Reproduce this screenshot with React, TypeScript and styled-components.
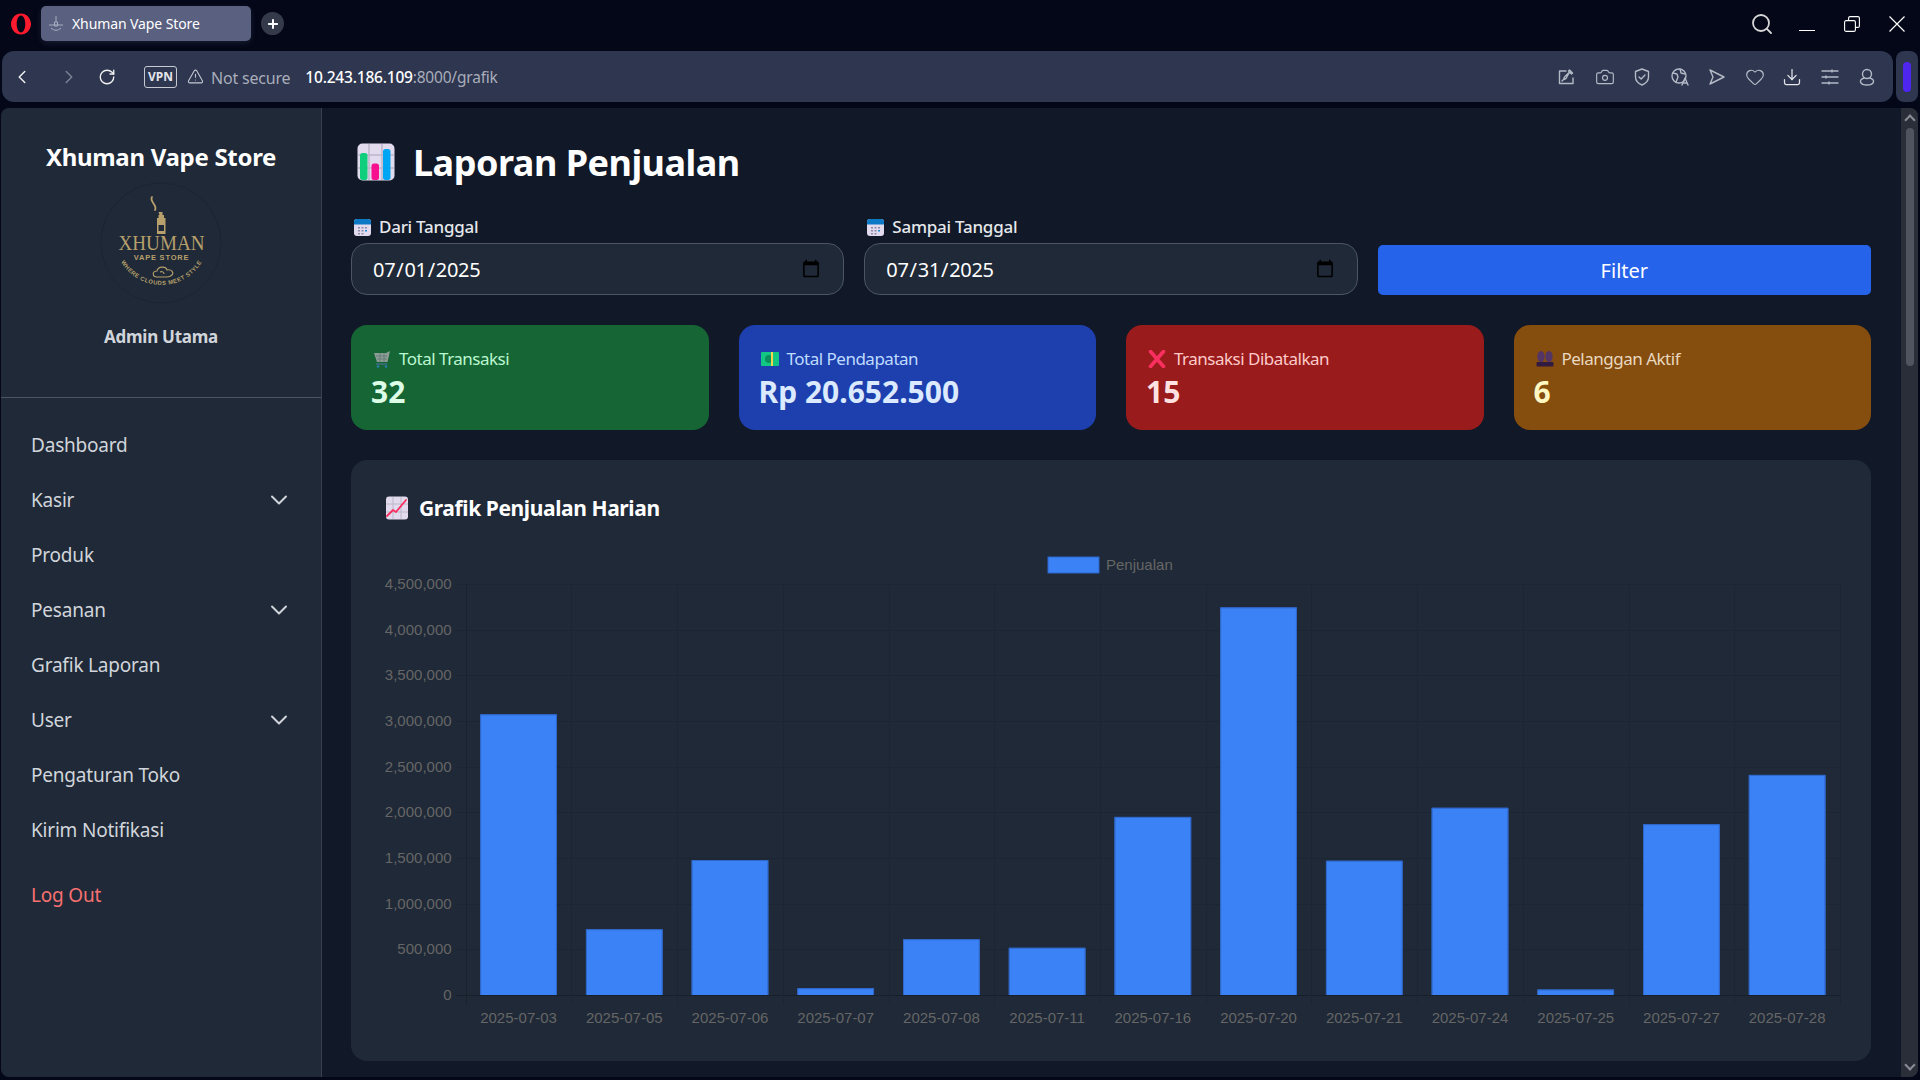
import React from "react";
import styled, { createGlobalStyle } from "styled-components";
import { ChevronDown, ChevronLeft, ChevronRight, RotateCw, Search, TriangleAlert, Plus, Camera, Heart, Download } from "lucide-react";

const FONT = `"Noto Sans", "Open Sans", sans-serif`;

const GlobalStyle = createGlobalStyle`
  * { box-sizing: border-box; }
  html, body { margin: 0; padding: 0; background: #000; }
  body { font-family: ${FONT}; overflow: hidden; }
`;

const navItems = [
  { label: "Dashboard" },
  { label: "Kasir", sub: true },
  { label: "Produk" },
  { label: "Pesanan", sub: true },
  { label: "Grafik Laporan" },
  { label: "User", sub: true },
  { label: "Pengaturan Toko" },
  { label: "Kirim Notifikasi" },
];

const sales = [
  { date: "2025-07-03", value: 3073000 },
  { date: "2025-07-05", value: 720000 },
  { date: "2025-07-06", value: 1478000 },
  { date: "2025-07-07", value: 75000 },
  { date: "2025-07-08", value: 611000 },
  { date: "2025-07-11", value: 517000 },
  { date: "2025-07-16", value: 1950000 },
  { date: "2025-07-20", value: 4244000 },
  { date: "2025-07-21", value: 1470000 },
  { date: "2025-07-24", value: 2050000 },
  { date: "2025-07-25", value: 60000 },
  { date: "2025-07-27", value: 1870000 },
  { date: "2025-07-28", value: 2410000 },
];

function OperaLogo() {
  return (
    <svg width="22" height="24" viewBox="0 0 22 24">
      <path
        fillRule="evenodd"
        fill="#ff1b2d"
        d="M11 1.500c5.500 0 10 4.700 10 10.500s-4.500 10.500-10 10.500S1 17.800 1 12 5.500 1.500 11 1.500zm0 2c-2.500 0-4.300 3.800-4.300 8.500s1.800 8.500 4.300 8.500 4.300-3.800 4.300-8.500-1.800-8.500-4.300-8.500z"
      />
    </svg>
  );
}

function TabIcon() {
  return (
    <svg width="18" height="18" viewBox="0 0 18 18" fill="none" stroke="#a9adc0" strokeWidth="1">
      <path d="M9 1v6M7.500 7h3v4h-3z" />
      <path d="M2 10h14M4 13c3 3 7 3 10 0" />
    </svg>
  );
}

function RestoreIcon() {
  return (
    <svg width="16" height="16" viewBox="0 0 16 16" fill="none" stroke="#fff" strokeWidth="1.100">
      <rect x="0.600" y="4.600" width="10.800" height="10.800" rx="1.500" />
      <path d="M4.600 4.500V2.100A1.500 1.500 0 0 1 6.100 0.600h7.800a1.500 1.500 0 0 1 1.500 1.500v7.800a1.500 1.500 0 0 1-1.500 1.500h-2.400" />
    </svg>
  );
}

function CloseIcon() {
  return (
    <svg width="16" height="16" viewBox="0 0 16 16" fill="none" stroke="#fff" strokeWidth="1.200">
      <path d="M0.500 0.500l15 15M15.500 0.500l-15 15" />
    </svg>
  );
}

function ToolIcon({ children }: { children: React.ReactNode }) {
  return (
    <svg width="20" height="20" viewBox="0 0 20 20" fill="none" stroke="#b4b9c6" strokeWidth="1.400" strokeLinecap="round" strokeLinejoin="round">
      {children}
    </svg>
  );
}

function BarsEmoji() {
  return (
    <svg width="38" height="38" viewBox="0 0 38 38">
      <rect x="0.500" y="0.500" width="37" height="37" rx="5" fill="#e2dbed" />
      <path d="M12 1v36M25 1v36M1 12h36M1 25h36" stroke="#bdb6ca" strokeWidth="1.500" />
      <rect x="3" y="10" width="7.500" height="27" rx="2.500" fill="#0fce7c" />
      <rect x="14.500" y="20.500" width="7.500" height="16.500" rx="2.500" fill="#f7118e" />
      <rect x="26" y="6" width="7.500" height="31" rx="2.500" fill="#00a6f4" />
    </svg>
  );
}

function CalendarEmoji() {
  return (
    <svg width="17" height="17" viewBox="0 0 17 17">
      <rect width="17" height="17" rx="3" fill="#e2dbed" />
      <path d="M0 3a3 3 0 0 1 3-3h11a3 3 0 0 1 3 3v2.500H0z" fill="#0c79c7" />
      <path d="M4 8h2v1.500H4zM7.500 8h2v1.500h-2zM11 8h2v1.500h-2zM4 11h2v1.500H4zM7.500 11h2v1.500h-2zM4 14h2v1.500H4zM7.500 14h2v1.500h-2z" fill="#8d89a8" />
      <path d="M11 11h2v1.500h-2z" fill="#1d8fe0" />
    </svg>
  );
}

function CartEmoji() {
  return (
    <svg width="18" height="18" viewBox="0 0 18 18">
      <path d="M1 3h12l4-2-2.500 11H4z" fill="#8d9d95" />
      <path d="M3 6h11M4 9h10M7 3v9M11 3v9" stroke="#5f7a73" strokeWidth="0.800" />
      <path d="M3 14h11" stroke="#3f6f80" strokeWidth="1.500" />
      <circle cx="5" cy="16.500" r="1.300" fill="#2b7fae" />
      <circle cx="13" cy="16.500" r="1.300" fill="#2b7fae" />
    </svg>
  );
}

function MoneyEmoji() {
  return (
    <svg width="18" height="14" viewBox="0 0 18 14">
      <rect width="18" height="14" rx="1" fill="#11c782" />
      <circle cx="8" cy="7" r="4" fill="#0a8f5f" />
      <rect x="10" width="2" height="14" fill="#f5d34a" />
    </svg>
  );
}

function CrossEmoji() {
  return (
    <svg width="18" height="18" viewBox="0 0 18 18">
      <path d="M2.500 1.500 L15.500 16.500 M15.500 1.500 L2.500 16.500" stroke="#f92f60" strokeWidth="3.600" strokeLinecap="round" />
    </svg>
  );
}

function PeopleEmoji() {
  return (
    <svg width="18" height="18" viewBox="0 0 18 18">
      <ellipse cx="5" cy="6.500" rx="3.600" ry="5.500" fill="#533566" />
      <ellipse cx="13" cy="6.500" rx="3.600" ry="5.500" fill="#533566" />
      <rect x="0.500" y="12" width="17" height="4.500" rx="1" fill="#321b41" />
    </svg>
  );
}

function TrendEmoji() {
  return (
    <svg width="24" height="24" viewBox="0 0 24 24">
      <rect x="1" y="0.500" width="22" height="23" rx="3" fill="#e2dbed" />
      <path d="M8 1v22M16 1v22M1 8h22M1 16h22" stroke="#bdb6ca" strokeWidth="1" />
      <path d="M2 20l6-6 3 2 10-12" fill="none" stroke="#f92f60" strokeWidth="1.800" strokeLinecap="round" strokeLinejoin="round" />
    </svg>
  );
}

function StoreLogo() {
  const gold = "#b7a06c";
  return (
    <svg width="122" height="122" viewBox="0 0 122 122">
      <circle cx="61" cy="61" r="60" fill="#1f2937" stroke="#1c2533" strokeWidth="1" />
      <path d="M52 15c-3 5 6 8 3 13" fill="none" stroke={gold} strokeWidth="1.800" strokeLinecap="round" />
      <path d="M58.500 30h4v3h1.500v3h1.500v16h-8.500V36h1.500v-3h1z" fill={gold} />
      <rect x="58.500" y="43" width="5.500" height="6" fill="#1f2937" />
      <text x="61.500" y="68" textAnchor="middle" fontFamily="Liberation Serif, serif" fontSize="21" fill={gold} textLength="86" lengthAdjust="spacingAndGlyphs">XHUMAN</text>
      <text x="61.500" y="78" textAnchor="middle" fontFamily="Liberation Sans, sans-serif" fontSize="7.500" fontWeight="700" fill={gold} letterSpacing="0.800">VAPE STORE</text>
      <path d="M57 95c-5 0-5-6 0-6 1-5 9-5 10-1 5-1 7 3 5 5-1 1-3 2-5 2zM60 90c2-1 4 0 4 2" fill="none" stroke={gold} strokeWidth="1.100" />
      <path id="logoArc" d="M14.500 56 A47 47 0 0 0 108.500 56" fill="none" />
      <text fontFamily="Liberation Sans, sans-serif" fontSize="5.800" fontWeight="700" fill={gold} letterSpacing="0.500">
        <textPath href="#logoArc" startOffset="50%" textAnchor="middle">WHERE CLOUDS MEET STYLE</textPath>
      </text>
    </svg>
  );
}

function SalesChart() {
  const width = 1458;
  const height = 475;
  const left = 82.7;
  const right = 1457;
  const top = 34;
  const bottom = 445;
  const max = 4500000;
  const slot = (right - left) / sales.length;
  const barWidth = 76.7;
  const yOf = (v: number) => bottom - (v / max) * (bottom - top);
  const ticks = Array.from({ length: 10 }, (_, i) => i * 500000);
  return (
    <svg width={width} height={height} viewBox={`0 0 ${width} ${height}`}>
      <rect x="665" y="7" width="51" height="16" fill="#3b82f6" stroke="#2f66c8" strokeWidth="1" />
      <ChartText x="723" y="20">Penjualan</ChartText>
      {ticks.map((t) => (
        <g key={t}>
          <line x1={left - 9} x2={right} y1={Math.round(yOf(t)) + 0.5} y2={Math.round(yOf(t)) + 0.5} stroke={t === 0 ? "#172029" : "#1c2532"} />
          <ChartText x="68.600" y={yOf(t) + 5} textAnchor="end">{t.toLocaleString("en-US")}</ChartText>
        </g>
      ))}
      {Array.from({ length: sales.length + 1 }, (_, i) => (
        <line key={i} x1={Math.round(left + i * slot) + 0.5} x2={Math.round(left + i * slot) + 0.5} y1={top} y2={bottom + 10} stroke={i === 0 ? "#19212d" : "#1c2532"} />
      ))}
      {sales.map((s, i) => {
        const x = left + slot * (i + 0.5) - barWidth / 2;
        return (
          <g key={s.date}>
            <rect x={x} y={yOf(s.value)} width={barWidth} height={bottom - yOf(s.value)} fill="#3b82f6" />
            <path d={`M${x + 0.5} ${bottom}V${yOf(s.value) + 0.5}H${x + barWidth - 0.5}V${bottom}`} fill="none" stroke="#2f66c8" strokeWidth="1" />
            <ChartText x={x + barWidth / 2} y="473" textAnchor="middle">{s.date}</ChartText>
          </g>
        );
      })}
    </svg>
  );
}

const stats = [
  { icon: <CartEmoji />, label: "Total Transaksi", value: "32", bg: "#166534", labelColor: "#bbf7d0", valueColor: "#dcfce7" },
  { icon: <MoneyEmoji />, label: "Total Pendapatan", value: "Rp 20.652.500", bg: "#1e40af", labelColor: "#bfdbfe", valueColor: "#dbeafe" },
  { icon: <CrossEmoji />, label: "Transaksi Dibatalkan", value: "15", bg: "#991b1b", labelColor: "#fecaca", valueColor: "#fee2e2" },
  { icon: <PeopleEmoji />, label: "Pelanggan Aktif", value: "6", bg: "#854d0e", labelColor: "#e9d8c0", valueColor: "#fef9c3" },
];

export default function App() {
  return (
    <>
      <GlobalStyle />
      <Shell>
        <TabStrip>
          <OperaLogo />
          <Tab>
            <TabIcon />
            <TabTitle>Xhuman Vape Store</TabTitle>
          </Tab>
          <NewTab><Plus size={14} strokeWidth={3.5} color="#fff" /></NewTab>
          <WindowControls>
            <SearchSlot><Search size={24} color="#d6d6d6" strokeWidth={1.8} /></SearchSlot>
            <Minimize />
            <RestoreIcon />
            <CloseIcon />
          </WindowControls>
        </TabStrip>
        <AddressRow>
          <AddressBar>
            <ChevronLeft size={22} color="#f0f0f0" strokeWidth={1.6} />
            <ForwardSlot><ChevronRight size={22} color="#7d8396" strokeWidth={1.6} /></ForwardSlot>
            <ReloadSlot><RotateCw size={18} color="#f0f0f0" strokeWidth={1.8} /></ReloadSlot>
            <VpnBadge>VPN</VpnBadge>
            <TriangleAlert size={17} color="#c7cad3" strokeWidth={1.5} />
            <NotSecure>Not secure</NotSecure>
            <Url><b>10.243.186.109</b>:8000/grafik</Url>
            <ToolIcons>
              <ToolIcon><path d="M16 11v5.500H2.500V4H9M9 11.500l-2.500 1 1-2.500 5-5 2 2 1-1-3-3-1 1 1 1zM6.500 12.500L5 14" /></ToolIcon>
              <Camera size={20} color="#b4b9c6" strokeWidth={1.4} />
              <ToolIcon><path d="M10 2l6.500 2.500V10c0 4-3 6.500-6.500 8C6.500 16.500 3.500 14 3.500 10V4.500zM7 10l2.200 2L13 8" /></ToolIcon>
              <ToolIcon><circle cx="9" cy="9" r="7" /><path d="M3 6l4 1 1 3-2 5M10 2l1 4 4 1M12 18l3-7 3 7M13 16h4" /></ToolIcon>
              <ToolIcon><path d="M3 3l14 7-14 7 3-7z" /></ToolIcon>
              <Heart size={20} color="#b4b9c6" strokeWidth={1.4} />
              <Download size={20} color="#e4e6eb" strokeWidth={1.5} />
              <ToolIcon><path d="M2 4h16M2 10h16M2 16h16M12 3v2M6 9v2M9 15v2" /></ToolIcon>
              <ToolIcon><circle cx="10" cy="7" r="4.500" /><path d="M7 11c-6 2-4 7 3 7s9-5 3-7" /></ToolIcon>
            </ToolIcons>
          </AddressBar>
          <SidebarToggle><ToggleMark /></SidebarToggle>
        </AddressRow>
        <Viewport>
          <Sidebar>
            <Brand>
              <BrandName>Xhuman Vape Store</BrandName>
              <StoreLogo />
              <AdminName>Admin Utama</AdminName>
            </Brand>
            <Nav>
              {navItems.map((item) => (
                <NavItem key={item.label}>
                  {item.label}
                  {item.sub && <NavChevron><ChevronDown size={28} color="#d1d5db" strokeWidth={1.700} /></NavChevron>}
                </NavItem>
              ))}
              <LogOut>Log Out</LogOut>
            </Nav>
          </Sidebar>
          <Main>
            <PageTitle><BarsEmoji />Laporan Penjualan</PageTitle>
            <FilterRow>
              <Field>
                <FieldLabel><CalendarEmoji />Dari Tanggal</FieldLabel>
                <DateInput type="date" defaultValue="2025-07-01" />
              </Field>
              <Field>
                <FieldLabel><CalendarEmoji />Sampai Tanggal</FieldLabel>
                <DateInput type="date" defaultValue="2025-07-31" />
              </Field>
              <FilterButton>Filter</FilterButton>
            </FilterRow>
            <StatGrid>
              {stats.map((s) => (
                <StatCard key={s.label} $bg={s.bg}>
                  <StatLabel $color={s.labelColor}>{s.icon}{s.label}</StatLabel>
                  <StatValue $color={s.valueColor}>{s.value}</StatValue>
                </StatCard>
              ))}
            </StatGrid>
            <ChartCard>
              <ChartTitle><TrendEmoji />Grafik Penjualan Harian</ChartTitle>
              <SalesChart />
            </ChartCard>
          </Main>
          <Scrollbar>
            <ScrollArrow $up />
            <ScrollThumb />
            <ScrollArrow />
          </Scrollbar>
        </Viewport>
      </Shell>
    </>
  );
}

const Shell = styled.div`
  display: flex;
  flex-direction: column;
  width: 1920px;
  height: 1080px;
  background: #030717;
  overflow: hidden;
`;
const TabStrip = styled.div`
  display: flex;
  align-items: center;
  height: 51px;
  padding: 0 15px 4px 10px;
  flex: none;
`;
const Tab = styled.div`
  display: flex;
  align-items: center;
  gap: 7px;
  width: 210px;
  height: 35px;
  margin-left: 9px;
  padding-left: 6px;
  background: #5a6080;
  border-radius: 5px;
  box-shadow: 0 2px 6px rgba(90, 96, 128, 0.25);
`;
const TabTitle = styled.span`
  color: #fff;
  font-size: 14px;
  letter-spacing: -0.1px;
`;
const NewTab = styled.div`
  display: flex;
  align-items: center;
  justify-content: center;
  width: 23px;
  height: 23px;
  margin-left: 10px;
  border-radius: 50%;
  background: #353a4a;
`;
const WindowControls = styled.div`
  display: flex;
  align-items: center;
  gap: 29px;
  margin-left: auto;
`;
const SearchSlot = styled.span`
  display: flex;
  margin-right: -4px;
`;
const Minimize = styled.div`
  width: 16px;
  height: 1px;
  margin-top: 14px;
  background: #fff;
`;
const AddressRow = styled.div`
  display: flex;
  gap: 3px;
  height: 51px;
  padding: 0 2px;
  flex: none;
`;
const AddressBar = styled.div`
  display: flex;
  align-items: center;
  flex: 1;
  padding: 0 16px 0 9px;
  background: #2e3650;
  border-radius: 12px;
`;
const ForwardSlot = styled.span`
  display: flex;
  margin-left: 25px;
`;
const ReloadSlot = styled.span`
  display: flex;
  margin-left: 18px;
`;
const VpnBadge = styled.span`
  width: 33px;
  height: 22px;
  margin: 0 10px 0 28px;
  border: 1px solid #c7cad3;
  border-radius: 3px;
  color: #e4e6eb;
  font-size: 12px;
  font-weight: 700;
  line-height: 20px;
  text-align: center;
`;
const NotSecure = styled.span`
  margin: 3px 0 0 7px;
  color: #a9adba;
  font-size: 16px;
  letter-spacing: -0.2px;
`;
const Url = styled.span`
  margin-left: 15px;
  color: #a9adba;
  font-size: 15.500px;
  letter-spacing: -0.2px;
  b {
    color: #fff;
    font-weight: 500;
  }
`;
const ToolIcons = styled.div`
  display: flex;
  align-items: center;
  gap: 17.500px;
  margin-left: auto;
`;
const SidebarToggle = styled.div`
  display: flex;
  align-items: center;
  justify-content: center;
  width: 22px;
  background: #2e3650;
  border-radius: 8px;
`;
const ToggleMark = styled.div`
  width: 8px;
  height: 30px;
  background: #4f25f0;
  border-radius: 4px;
`;
const Viewport = styled.div`
  display: flex;
  height: 969px;
  margin: 6px 2px 0 1px;
  background: #111827;
  border-radius: 8px;
  overflow: hidden;
  flex: none;
`;
const Sidebar = styled.aside`
  width: 321px;
  flex: none;
  background: #1f2937;
  border-right: 1px solid #374151;
`;
const Brand = styled.div`
  display: flex;
  flex-direction: column;
  align-items: center;
  height: 290px;
  padding-top: 30px;
  border-bottom: 1px solid #4b5563;
`;
const BrandName = styled.h1`
  margin: 0 0 6px;
  color: #fff;
  font-size: 24px;
  font-weight: 700;
  line-height: 38px;
  letter-spacing: -0.3px;
`;
const AdminName = styled.div`
  margin-top: 21px;
  color: #d1d5db;
  font-size: 17px;
  font-weight: 700;
  letter-spacing: -0.25px;
`;
const Nav = styled.nav`
  display: flex;
  flex-direction: column;
  padding: 19px 30px 0 30px;
`;
const NavItem = styled.div`
  display: flex;
  align-items: center;
  justify-content: space-between;
  height: 55px;
  color: #d1d5db;
  font-size: 19px;
  letter-spacing: -0.2px;
`;
const NavChevron = styled.span`
  display: flex;
  margin-right: -2px;
`;
const LogOut = styled(NavItem)`
  margin-top: 10px;
  color: #f87171;
`;
const Main = styled.main`
  flex: 1;
  min-width: 0;
  padding: 25px 30px 0 29px;
`;
const PageTitle = styled.h2`
  display: flex;
  align-items: center;
  gap: 18px;
  height: 58px;
  margin: 0 0 23px;
  padding-left: 6px;
  color: #fff;
  font-size: 36px;
  font-weight: 700;
  letter-spacing: -0.5px;
`;
const FilterRow = styled.div`
  display: grid;
  grid-template-columns: repeat(3, 1fr);
  gap: 20px;
  align-items: end;
`;
const Field = styled.label`
  display: flex;
  flex-direction: column;
  gap: 3px;
`;
const FieldLabel = styled.span`
  display: flex;
  align-items: center;
  gap: 8px;
  padding-left: 3px;
  color: #e5e7eb;
  font-size: 17px;
  font-weight: 500;
  line-height: 26px;
  letter-spacing: -0.25px;
`;
const DateInput = styled.input`
  height: 52px;
  padding: 0 20px 0 20px;
  background: #1f2937;
  border: 1px solid #4b5563;
  border-radius: 16px;
  color: #fff;
  font-family: ${FONT};
  font-size: 20px;
  letter-spacing: -0.3px;
  outline: none;
`;
const FilterButton = styled.button`
  height: 50px;
  border: none;
  border-radius: 5px;
  background: #2563eb;
  color: #fff;
  font-family: ${FONT};
  font-size: 20px;
`;
const StatGrid = styled.div`
  display: grid;
  grid-template-columns: repeat(4, 1fr);
  gap: 30px;
  margin-top: 30px;
`;
const StatCard = styled.div<{ $bg: string }>`
  display: flex;
  flex-direction: column;
  justify-content: center;
  height: 105px;
  padding: 2px 20px 0;
  background: ${(p) => p.$bg};
  border-radius: 16px;
`;
const StatLabel = styled.div<{ $color: string }>`
  display: flex;
  align-items: center;
  gap: 8px;
  color: ${(p) => p.$color};
  font-size: 17px;
  line-height: 26px;
  letter-spacing: -0.5px;
  svg {
    margin-left: 2px;
  }
`;
const StatValue = styled.div<{ $color: string }>`
  color: ${(p) => p.$color};
  font-size: 30px;
  font-weight: 700;
  line-height: 40px;
`;
const ChartCard = styled.section`
  height: 601px;
  margin-top: 30px;
  padding: 32px 30px 0 32px;
  background: #1f2937;
  border-radius: 16px;
`;
const ChartTitle = styled.h3`
  display: flex;
  align-items: center;
  gap: 10px;
  height: 32px;
  margin: 0 0 26px;
  padding-left: 2px;
  color: #fff;
  font-size: 21px;
  font-weight: 700;
  letter-spacing: -0.4px;
`;
const ChartText = styled.text`
  fill: #666;
  font-family: "Liberation Sans", Arial, sans-serif;
  font-size: 15px;
`;
const Scrollbar = styled.div`
  display: flex;
  flex-direction: column;
  align-items: center;
  width: 17px;
  flex: none;
  background: #2a2e38;
`;
const ScrollThumb = styled.div`
  width: 8px;
  height: 238px;
  margin-bottom: auto;
  background: #50545e;
  border-radius: 4px;
`;
const ScrollArrow = styled.div<{ $up?: boolean }>`
  width: 8px;
  height: 8px;
  margin: ${(p) => (p.$up ? "8px 0 4px" : "0 0 8px")};
  border-left: 2px solid #8a8d94;
  border-top: 2px solid #8a8d94;
  transform: rotate(${(p) => (p.$up ? "45deg" : "225deg")});
`;
